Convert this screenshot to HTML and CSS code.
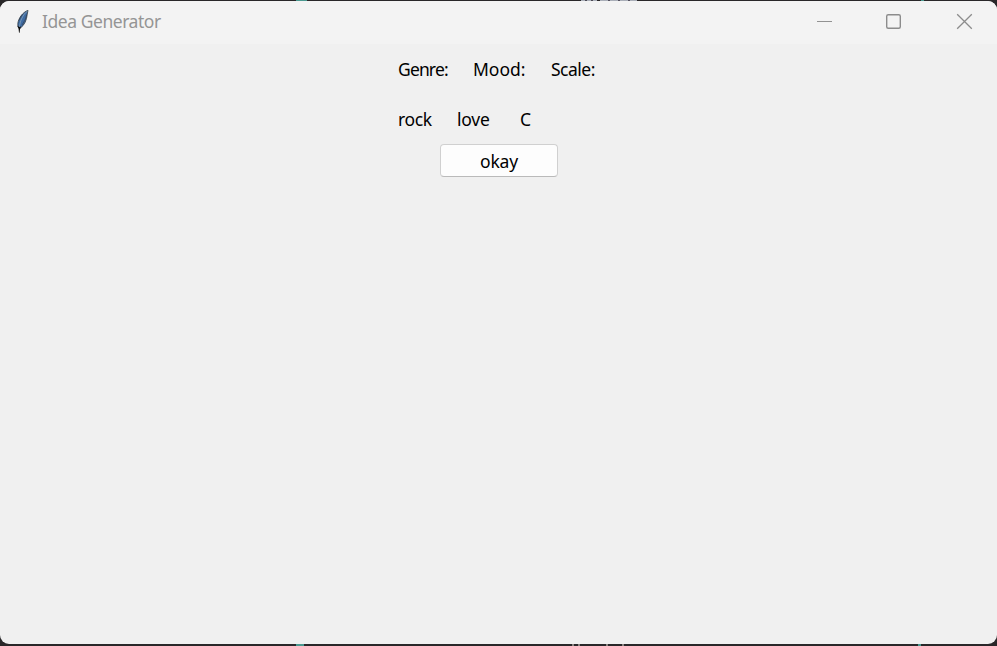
FILE: index.html
```html
<!DOCTYPE html>
<html lang="en">
<head>
<meta charset="utf-8">
<title>Idea Generator</title>
<link rel="stylesheet" href="styles.css">
</head>
<body>
<div class="window">
  <header class="titlebar">
    <svg class="feather" width="16" height="26" viewBox="0 0 16 26">
      <path d="M13 1.3C7.5 3.5 3.6 9 2.8 14.5L3 18.2L5.5 19C9.5 16 11.7 11 12.2 5.5Z" fill="#3e6ba3" stroke="#343c43" stroke-width=".8"/>
      <path d="M12.5 2C8 5.5 4.8 12 4.3 19" fill="none" stroke="#91aabd" stroke-width=".7"/>
      <path d="M7.4 5.5L4 11.5M11.8 5.5L10 11L7 16" fill="none" stroke="#303c4b" stroke-width=".6"/>
      <path d="M2.4 16.5L4.1 18L6 17.5L5 20.2L4.6 23.8H4L3.6 20Z" fill="#090909"/>
    </svg>
    <span class="title">Idea Generator</span>
    <div class="controls">
      <svg width="71" height="43"><path d="M17 20.5H32" stroke="#929292"/></svg>
      <svg width="70" height="43"><rect x="15.7" y="13.7" width="13.6" height="13.6" rx="1.5" fill="none" stroke="#8c8c8c" stroke-width="1.4"/></svg>
      <svg width="56" height="43"><path d="M16.2 13.2L30.8 27.8M30.8 13.2L16.2 27.8" fill="none" stroke="#8c8c8c" stroke-width="1.3"/></svg>
    </div>
  </header>
  <main class="content">
    <div class="row headings">
      <span class="genre-label">Genre:</span><span class="mood-label">Mood:</span><span class="scale-label">Scale:</span>
    </div>
    <div class="row values">
      <span class="genre">rock</span><span class="mood">love</span><span class="scale">C</span>
    </div>
    <button class="okay">okay</button>
  </main>
</div>
</body>
</html>
```
FILE: styles.css
```css
* { box-sizing: border-box; }
html { background: #242224; }
body {
  margin: 0;
  height: 646px;
  padding: 1px 0 2px;
  overflow: hidden;
  font-family: "Noto Sans", sans-serif;
  font-size: 17.5px;
  background:
    linear-gradient(#4b9990, #4b9990) 296px 0 / 11px 1px no-repeat,
    linear-gradient(#4b9990, #4b9990) 921px 0 / 3px 1px no-repeat,
    repeating-linear-gradient(90deg, #a9aeb8 0 4px, #4c4b56 4px 6px) 581px 0 / 16px 1px no-repeat,
    repeating-linear-gradient(90deg, #a9aeb8 0 8px, #555260 8px 10px) 600px 0 / 37px 1px no-repeat,
    linear-gradient(#4b9990, #4b9990) 296px 644px / 8px 2px no-repeat,
    linear-gradient(#4b9990, #4b9990) 918px 644px / 3px 2px no-repeat,
    linear-gradient(#8c8582, #8c8582) 572px 644px / 2px 2px no-repeat,
    linear-gradient(#8c8582, #8c8582) 578px 644px / 2px 2px no-repeat,
    linear-gradient(#8c8582, #8c8582) 606px 644px / 2px 2px no-repeat,
    linear-gradient(#8c8582, #8c8582) 622px 644px / 2px 2px no-repeat,
    #292729;
}
.window {
  height: 643px;
  background: #f0f0f0;
  border-radius: 9px;
  overflow: hidden;
}
.titlebar {
  height: 43px;
  display: flex;
  align-items: center;
  background: #f3f3f3;
  color: #959595;
}
.feather { margin: 0 11px 1px 15px; flex: none; }
.title { line-height: 24px; margin-bottom: 3px; letter-spacing: -.45px; white-space: nowrap; }
.controls { display: flex; margin-left: auto; }
.content {
  display: flex;
  flex-direction: column;
  align-items: center;
  padding-top: 13px;
  color: #000;
}
.row { display: flex; width: 201px; height: 25px; line-height: 25px; white-space: nowrap; }
.headings { margin-bottom: 25px; }
.genre-label { width: 75px; letter-spacing: -.85px; }
.mood-label { width: 78px; letter-spacing: 0; }
.scale-label { letter-spacing: -.5px; }
.genre { width: 59px; letter-spacing: -.4px; }
.mood { width: 63px; letter-spacing: -.2px; }
.okay {
  margin: 12px 0 0 1px;
  width: 118px;
  height: 33px;
  padding: 1px 0 0;
  border: 1px solid #d0d0d0;
  border-bottom-color: #bababa;
  border-radius: 4px;
  background: #fdfdfd;
  color: #000;
  font: inherit;
  line-height: 28px;
  letter-spacing: -.2px;
}
```
